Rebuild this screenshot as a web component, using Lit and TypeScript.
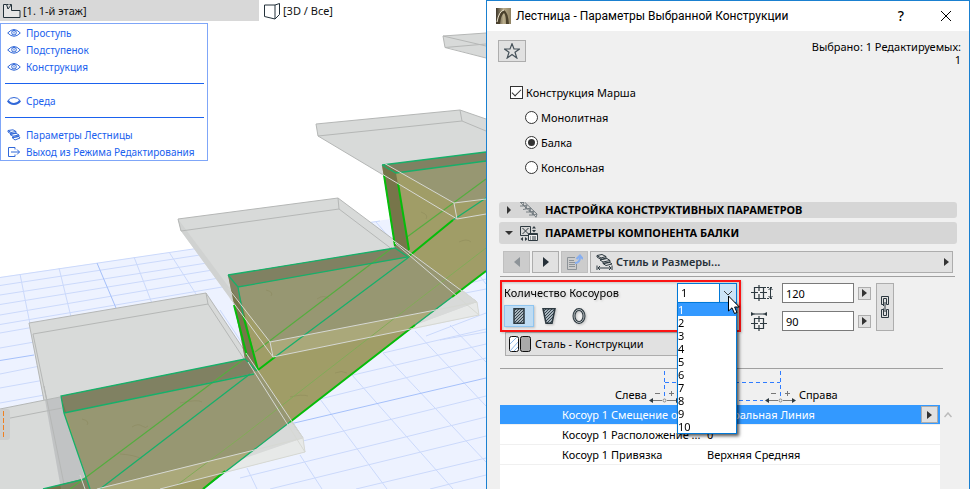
import { LitElement, html, css, svg } from "lit";
import { customElement, property, state } from "lit/decorators.js";
import { classMap } from "lit/directives/class-map.js";

const eye = svg`<svg width="14" height="12" viewBox="0 0 14 12" fill="none" stroke="currentColor"><path d="M.7 6Q7 -1 13.300 6Q7 12.500 .7 6Z"/><circle cx="7" cy="5.700" r="2.300"/><path d="M7 4.500v2"/></svg>`;
const lid = svg`<svg width="14" height="12" viewBox="0 0 14 12" fill="none" stroke="currentColor"><path d="M1 5.500Q3 2.500 7 2.500Q11 2.500 13 5.500"/><path d="M.8 5.500Q3 9 7 9Q11 9 13.200 5.500" stroke-width="2.200"/></svg>`;
const stairs = svg`<svg width="14" height="12" viewBox="0 0 14 12" fill="none" stroke="currentColor"><path d="M1 1.500L6 .8L9 2.500L4 3.500ZM4 3.500V5L9 4L9 2.500M3 5.500L9 4.300L12 6L6 7.200L3 5.500M6 7.200V8.500L12 7.300V6M5 8.500L12 7.500L13 9L8 11L5 8.500M1 1.500V3L4 5"/></svg>`;
const exit = svg`<svg width="14" height="12" viewBox="0 0 14 12" fill="none" stroke="currentColor"><path d="M8 3.500V1.500H1.500V10.500H8V8.500M4 6H12.500M10 3.500L12.500 6L10 8.500"/></svg>`;

@customElement("stair-scene")
class StairScene extends LitElement {
  static styles = css`
    :host { display: block; }
    svg { display: block; width: 100%; height: 100%; }
    .floor { fill: #edf2ff; }
    .grid { stroke: #cbd9fb; fill: none; }
    .axis { stroke: #a5c0fa; fill: none; }
    .slab { fill: #d8dad9; }
    .rim { fill: #d0d2d1; }
    .face { fill: #e7e9e8; }
    .wood { fill: #a09d67; }
    .riser { fill: #77754a; }
    .veil { fill: #8a9094; fill-opacity: 0.3; }
    .haze { fill: #8c9080; fill-opacity: 0.45; }
    .edge { stroke: #b5b7b6; fill: none; }
    .pale { stroke: #d6d8d3; fill: none; }
    .teal { stroke: #17b06a; fill: none; stroke-width: 1.3; }
    .bright { stroke: #06bd0a; fill: none; stroke-width: 2; }
    .soft { stroke: #55ad3f; fill: none; stroke-width: 1.2; }
    .faint { stroke: #82ab58; fill: none; }
    .knot { stroke: #858252; fill: none; opacity: 0.35; stroke-width: 1; }
    .grip { fill: #cccdcc; }
    .dash { stroke: #f08020; stroke-dasharray: 5 2; }
  `;
  render() {
    return html`<svg viewBox="0 0 486 489" preserveAspectRatio="xMinYMin slice" aria-hidden="true">
      <defs>
        <clipPath id="timber"><path d="M382 165L486 152V271L203 489H43L86 478L61 396L245 359L228 275L395 248Z" /></clipPath>
      </defs>
      <path class="floor" d="M0 277L193 249L380 220.500L486 205V489H0Z" />
      <path class="grid" d="M0 277.500L193 249L380 221M0 285.500L200 255M0 295L207 263M0 304.500L225 268M0 315L225 277M0 324.500L240 284M0 333L40 326M0 348L40 341M0 374L40 366M0 388L50 379M0 403L50 394M383 353L486 329M353 375L486 344M320 399L486 358M303 441L486 396M240 478L486 417M270 489L486 436M356 489L486 458M430 489L486 475M470 283L486 279M455 295L486 289M440 340L486 332M426 336L486 313" />
      <path class="grid" d="M20 274L30 324M59 268L73 325M134 257L160 324M169 252L196 294M220 310L250 355M247 468L257 489M300 455L322 489M320 399L387 489M352 375L453 489M383 353L486 462M415 331L486 406M450 325L486 362M479 275L486 284M376 222L400 250" />
      <path class="axis" d="M0 360.500L34 355M97 263L116 308M290 424L486 378" />

      <path class="slab" d="M443 36L486 33V58L445 47Z" />
      <path class="edge" d="M486 33L443 36L445 47.500L486 44M445 47.500L486 58M443 36L486 46" />
      <path class="slab" d="M316 124L460 110L486 119V214L457 219L318 136Z" />
      <path class="edge" d="M486 119L460 110L316 124L318 136L462 121L460 110M462 121L486 131M318 136L457 219" />
      <path class="slab" d="M178 219L338 198L477 302L479 315L273 357L181 231Z" />
      <path class="rim" d="M178 219L181 231L273 357L270 342Z" />
      <path class="edge" d="M178 219L338 198L339 209L181 231L178 219M338 198L477 302M339 209L479 315" />
      <path class="slab" d="M29 323L206 293L303 438L305 452L160 489H61Z" />
      <path class="edge" d="M61 488L29 323L206 293L208 304L33 334L65 489M206 293L303 438M208 304L305 452" />
      <path class="slab" d="M0 409L60 397L88 489H0Z" />
      <path class="veil" d="M45 400L61 397L88 489H61Z" />
      <path class="edge" d="M0 409L60 397M0 420L62 408M44 386L65 489" />
      <path class="face" d="M415 325L477 302L479 315L400 332ZM225 465L303 438L305 452L190 482Z" />
      <path class="slab" d="M415 325L450 297L464 291L477 302ZM290 422L303 438L240 459Z" />

      <path class="wood" d="M382 165L486 152V271L203 489H90L64 413L61 396L245 359L238 310L228 275L395 248Z" />
      <path class="riser" d="M382 165L486 152V161L396 173L409 250L408 257L238 287L258 370L250 374L64 413L61 396L245 359L228 275L395 248Z" />
      <path class="riser" d="M43 489L86 478L90 489Z" />
      <g clip-path="url(#timber)">
        <path class="haze" d="M178 219L338 198L477 302L270 342Z" />
        <path class="haze" d="M29 323L206 293L303 438L95 489H61Z" />
        <path class="haze" d="M382 150H486V199L454 203L382 162Z" />
        <path class="face" fill-opacity=".15" d="M270 342L477 302L479 315L273 357ZM95 489L303 438L305 452L160 489Z" />
      </g>
      <path class="knot" d="M82 419q8 2 5 6M132 427q6-4 10-1t6 0M180 403q18-4 22-1M266 290q8 2 5 6M317 299q7-5 12 0M357 264q10-3 20-1M421 212q8 3 5 7M459 242q8-4 12 0M335 373q7-3 12 0M290 397q12-3 18-1M120 454q15 1 22 5" />

      <path class="faint" d="M177 485L240 438L387 324L486 248" />
      <path class="soft" d="M70 489L85 478L244 359M255 352L392 248M407 237L486 179" />
      <path class="teal" d="M100 489L250 374M275 357L409 257M453 220L486 198M203 489L290 422M415 325L452 297M43 489L85 479" />
      <path class="bright" d="M258 370L275 357M409 256L453 220M290 422L415 325M452 297L486 271M203 489L225 471" />
      <path class="teal" d="M90 489L64 413L61 396L245 359L257 371M64 413L254 374M228 275L238 287L408 257L395 248L228 275M382 165L396 173L486 161M382 165L486 152M238 287L243 315" />
      <path class="bright" d="M234 305L247 356M243 315L258 370M384 175L395 246M398 183L409 250" />
      <path class="pale" d="M382 162L454 203L486 199M382 174L457 219L486 214M454 203L457 219M228 288L270 342L477 302L479 315L273 357L230 298M270 342L273 357M390 238L477 302M395 243L479 315M97 489L303 438L305 452L160 489M246 353L303 438M248 362L305 452M80 475L85 489" />
      <rect class="grip" x="-3" y="409" width="13" height="31" rx="3" />
      <path class="dash" d="M3.500 411V437" />
    </svg>`;
  }
}

@customElement("view-pane")
class ViewPane extends LitElement {
  static styles = css`
    :host { display: grid; grid-template-rows: 21px 1fr; position: relative; background: #fff; }
    stair-scene { position: absolute; inset: 0; }
    .tabs { display: grid; grid-template-columns: 259fr 227fr; position: relative; z-index: 2; background: #fff; }
    .tab { border: 0; padding: 0 2px; background: #fff; display: flex; align-items: center; gap: 2px; font: inherit; color: #111; text-align: left; }
    .tab.on { background: #d8d8d8; }
    .tab.second { padding: 0 5px; gap: 3px; }
    .menu { position: relative; z-index: 1; justify-self: start; align-self: start; margin-top: 2px; box-sizing: border-box; width: 208px; border: 1px solid #7fa6f8; padding: 0 3px 0 4px; background: #fff; font-size: 10px; }
    .item { display: flex; align-items: center; gap: 5px; width: 100%; height: 17px; padding: 0 0 0 2px; border: 0; background: none; font: inherit; color: #1b62ee; white-space: nowrap; }
    .line { height: 17px; display: flex; align-items: center; }
    .line::before { content: ""; flex: 1; height: 1px; background: #1b62ee; }
    .item svg { flex: none; color: #3168d8; }
  `;
  render() {
    const item = (icon: unknown, text: string) => html`<button class="item">${icon}<span>${text}</span></button>`;
    const line = html`<div class="line" role="separator"></div>`;
    return html`<stair-scene></stair-scene>
      <div class="tabs">
        <button class="tab on"><svg width="19" height="18" viewBox="0 0 19 18" fill="#e6e6e6" stroke="#23313a"><path d="M1.500 15.500V2.500H4.500L6 7L9.500 2.500V8.500H18V15.500Z"/><path d="M4.500 2.500H9" fill="none" stroke-dasharray="2 1"/></svg>[1. 1-й этаж]</button>
        <button class="tab second"><svg width="16" height="18" viewBox="0 0 16 18" fill="none" stroke="#23313a"><path d="M.5 3L11 3L15.500 1.500V12.500L11 17L.5 14.500ZM11 3V17"/></svg>[3D / Все]</button>
      </div>
      <div class="menu">
        ${item(eye, "Проступь")}${item(eye, "Подступенок")}${item(eye, "Конструкция")}
        ${line}${item(lid, "Среда")}${line}
        ${item(stairs, "Параметры Лестницы")}${item(exit, "Выход из Режима Редактирования")}
      </div>`;
  }
}

const playRight = svg`<svg width="6" height="10" viewBox="0 0 6 10"><path d="M0 0L6 5L0 10Z" fill="currentColor"/></svg>`;
const smallRight = svg`<svg width="5" height="8" viewBox="0 0 5 8"><path d="M0 0L5 4L0 8Z" fill="#333"/></svg>`;
const hatch = svg`<pattern id="h" width="3" height="3" patternUnits="userSpaceOnUse"><rect width="3" height="3" fill="#a9b6be" stroke="none"/><path d="M0 3L3 0" stroke="#34424b" stroke-width="1"/></pattern>`;

@customElement("settings-dialog")
class SettingsDialog extends LitElement {
  @property({ type: Number }) count = 1;
  @state() private profile = 0;

  static styles = css`
    :host { display: flex; flex-direction: column; box-sizing: border-box; min-width: 0; border: 1px solid #1a80d0; border-bottom: 0; background: #f0f0f0; color: #000; box-shadow: 0 3px 14px rgba(0, 0, 0, 0.4); }
    button, input, select { font: inherit; color: inherit; box-sizing: border-box; margin: 0; }
    button { padding: 0; border: 1px solid #adadad; background: #e1e1e1; display: flex; align-items: center; justify-content: center; }
    svg { display: block; flex: none; }
    .title { height: 30px; background: #fff; display: flex; align-items: center; padding: 0 17px 0 9px; gap: 5px; }
    .title h1 { flex: 1; margin: 0; font: 400 12px/16px Roboto, "Noto Sans", sans-serif; white-space: nowrap; }
    .title button { border: 0; background: none; width: 12px; height: 20px; font-size: 14px; font-weight: 500; }
    .title button + button { margin-left: 28px; }
    .top { display: flex; justify-content: space-between; align-items: flex-start; height: 26px; padding: 9px 8px 0 11px; }
    .star { width: 28px; height: 22px; }
    .selected { margin: 0; text-align: right; line-height: 13px; white-space: nowrap; }
    .selected span { display: block; }
    .options { padding: 14px 0 0 23px; }
    .options label { display: flex; align-items: center; gap: 3px; height: 25px; }
    .options .sub { margin-left: 15px; }
    .options input { appearance: none; width: 13px; height: 13px; border: 1px solid #333; background: #fff; display: grid; place-items: center; }
    .options input[type="radio"] { border-radius: 50%; }
    .options input[type="radio"]:checked::before { content: ""; width: 7px; height: 7px; border-radius: 50%; background: #333; }
    .options input[type="checkbox"]:checked::before { content: ""; width: 8px; height: 4px; border: solid #333; border-width: 0 0 1px 1px; transform: rotate(-45deg); margin-bottom: 3px; }
    .section { margin: 4px 12px 0; width: auto; height: 22px; border: 0; border-radius: 3px; background: #d6d6d6; justify-content: flex-start; gap: 7px; padding-left: 6px; font-weight: 700; white-space: nowrap; }
    .section.short { height: 16px; margin-top: 22px; }
    .tools { display: grid; grid-template-columns: 27px 27px 27px 1fr; gap: 2px; margin: 7px 16px 2px; height: 22px; }
    .tools button { color: #263038; }
    .tools button:disabled { background: #ccc; border-color: #bfbfbf; color: #8d9398; }
    .tools .wide { justify-content: flex-start; gap: 3px; padding: 0 3px 0 5px; font-weight: 600; }
    .wide span { flex: 1; text-align: left; }
    .rule { height: 1px; border: 0; margin: 1px 14px 0 13px; background: #a0a0a0; }
    .work { display: flex; align-items: flex-start; margin: 3px 14px 0 13px; }
    .mark { box-sizing: border-box; width: 241px; height: 52px; border: 2px solid #fb1414; padding: 1px 2px 0; filter: drop-shadow(1px 1px 1px rgba(0, 0, 0, 0.2)); }
    .count { display: flex; justify-content: space-between; align-items: center; height: 20px; }
    .combo { position: relative; width: 60px; height: 20px; }
    .combo select { appearance: none; width: 60px; height: 20px; border: 1px solid #0078d7; border-radius: 0; background: #fff; padding: 0 3px; display: block; }
    .drop { position: absolute; right: 0; top: 0; box-sizing: border-box; width: 18px; height: 20px; border: 1px solid #0078d7; background: #cce4f7; display: grid; place-items: center; pointer-events: none; }
    .list { position: absolute; z-index: 3; top: 19px; left: 0; width: 58px; margin: 0; padding: 0; list-style: none; border: 1px solid #0078d7; background: #fff; box-shadow: 2px 2px 3px rgba(0, 0, 0, 0.55); }
    .list li { height: 13px; line-height: 13px; }
    .list .on { background: #3399ff; color: #fff; }
    .cursor { position: absolute; z-index: 4; left: 51px; top: 12px; }
    .kinds { display: flex; margin-top: 2px; }
    .kinds button { width: 30px; height: 22px; border: 1px solid transparent; background: none; }
    .kinds .on { background: #bfdcf3; border-color: #8fc5f0; }
    .sizes { display: grid; grid-template-columns: 24px 72px 13px; column-gap: 4px; row-gap: 8px; align-items: center; margin: 3px 0 0 10px; }
    .sizes input { width: 72px; height: 20px; border: 1px solid #7a7a7a; background: #fff; padding: 0 3px; margin-left: 3px; }
    .sizes button { width: 13px; height: 13px; margin-left: 3px; }
    .link { width: 18px; height: 48px; margin: 3px 0 0 8px; }
    .steel { margin: 0 0 11px 18px; width: 210px; height: 24px; justify-content: flex-start; gap: 4px; padding-left: 3px; }
    .base { margin-right: 26px; }
    .plan { display: flex; align-items: center; height: 36px; margin: 0 29px 0 128px; gap: 2px; }
    .plan span { padding-top: 16px; }
    .data { display: flex; flex: 1; margin: 0 15px 0 13px; gap: 1px; }
    .sheet { flex: 1; background: #fff; }
    table { width: 100%; border-collapse: collapse; table-layout: fixed; }
    td { height: 19px; padding: 0; border-bottom: 1px solid #f0f0f0; white-space: nowrap; line-height: 16px; }
    td:first-child { width: 145px; padding-left: 62px; overflow: hidden; }
    td.act { width: 19px; }
    tr.on { background: #3399ff; color: #fff; }
    .act button { width: 17px; height: 17px; }
    .scroll { align-self: flex-start; border: 0; background: none; width: 13px; height: 20px; }
  `;

  render() {
    const counts = Array.from({ length: 10 }, (_, i) => i + 1);
    return html`
      <header class="title">
        <svg width="15" height="16" viewBox="0 0 15 16"><defs><linearGradient id="g"><stop offset="0" stop-color="#3e372b"/><stop offset=".5" stop-color="#b9ad8c"/><stop offset="1" stop-color="#8f8263"/></linearGradient></defs><path d="M0 0H15V16H0Z" fill="url(#g)"/><path d="M1 16Q3 3 8 2Q12 4 13 16H10Q10 7 8 5Q5 7 4 16Z" fill="#4b412c"/><path d="M1 14Q3 3 8 2" fill="none" stroke="#eee6d0"/></svg>
        <h1>Лестница - Параметры Выбранной Конструкции</h1>
        <button aria-label="Справка">?</button>
        <button aria-label="Закрыть"><svg width="10" height="10" viewBox="0 0 10 10" stroke="#000" fill="none"><path d="M0 0L10 10M10 0L0 10"/></svg></button>
      </header>
      <div class="top">
        <button class="star" aria-label="Избранное"><svg width="16" height="16" viewBox="0 0 16 16" fill="none" stroke="#46525a" stroke-width="1.200"><path d="M8 .8L10 6H15.500L11 9.300L12.800 15L8 11.500L3.200 15L5 9.300L.5 6H6Z"/></svg></button>
        <p class="selected"><span>Выбрано: 1 Редактируемых:</span><span>1</span></p>
      </div>
      <div class="options">
        <label><input type="checkbox" checked />Конструкция Марша</label>
        <label class="sub"><input type="radio" name="kind" />Монолитная</label>
        <label class="sub"><input type="radio" name="kind" checked />Балка</label>
        <label class="sub"><input type="radio" name="kind" />Консольная</label>
      </div>
      <button class="section short"><svg width="8" height="8" viewBox="0 0 8 8"><path d="M2 0L6 4L2 8Z" fill="#333"/></svg>
        <svg width="18" height="16" viewBox="0 0 18 16" fill="none" stroke="#6d767c"><path d="M0 .5L4 .5L3 4L7 3L6 7L11 6L10 10L14 9L13 13L17 12L16 15.500M1 1L16 15M0 4L3 4M3 7.500L6 7L5 4M6 10L10 10L9 6M9 13L13 13L12 9M5 .5L17 12" stroke-width=".9"/></svg>НАСТРОЙКА КОНСТРУКТИВНЫХ ПАРАМЕТРОВ</button>
      <button class="section"><svg width="8" height="8" viewBox="0 0 8 8"><path d="M0 2L8 2L4 6Z" fill="#333"/></svg>
        <svg width="18" height="17" viewBox="0 0 18 17" fill="none" stroke="#2d3940"><path d="M.5 1.500H10.500V10.500H.5ZM2.500 3L8.500 9M8.500 3L2.500 9"/><path d="M8.500 8.500H17.500V15.500H8.500Z" fill="#eee"/><path d="M8.500 9.500H17.500M10 12H11M12 12H16M10 14H11M12 14H16"/><path d="M12 5H16L14 7.500ZM12 3.500H16L14 1ZM3 12V16L.5 14ZM5 12V16L7.500 14Z" fill="#2d3940" stroke="none"/></svg>ПАРАМЕТРЫ КОМПОНЕНТА БАЛКИ</button>
      <div class="tools">
        <button disabled aria-label="Назад"><svg width="6" height="10" viewBox="0 0 6 10"><path d="M6 0L0 5L6 10Z" fill="currentColor"/></svg></button>
        <button aria-label="Вперёд">${playRight}</button>
        <button disabled aria-label="Передать"><svg width="17" height="16" viewBox="0 0 17 16" fill="none" stroke="#8d9398"><path d="M9 3.500H1.500V15.500H10.500V10M3 6.500H8M3 8.500H9M3 10.500H9M3 12.500H9"/><path d="M9 9Q14 9 14 3M10.500 5L14 1.500L17 5" stroke="#86aef0" stroke-width="2"/></svg></button>
        <button class="wide"><svg width="17" height="17" viewBox="0 0 17 17" fill="none" stroke="#2d3940"><path d="M1 1.500L6 .5L10 2.500L5 4ZM1 1.500V3L5 5.500M5 4V5.500L10 4V2.500M4 6L11 4.500L14 6.500L7 8ZM7 8V9.500L14 8V6.500M7 9.500L14 8.500L16 10L10 11.500ZM1 11.500V16M16 11.500V16M2 14H15M4 12L2 14L4 16M13 12L15 14L13 16"/></svg><span>Стиль и Размеры...</span>${smallRight}</button>
      </div>
      <hr class="rule" />
      <div class="work">
        <div class="mark">
          <div class="count">
            <label for="count">Количество Косоуров</label>
            <div class="combo">
              <select id="count">${counts.map((n) => html`<option ?selected=${n === this.count}>${n}</option>`)}</select>
              <div class="drop"><svg width="8" height="5" viewBox="0 0 8 5" fill="none" stroke="#444"><path d="M0 0L4 4L8 0"/></svg></div>
              <ul class="list" role="listbox">${counts.map((n) => html`<li role="option" class=${classMap({ on: n === this.count })} @click=${() => (this.count = n)}>${n}</li>`)}</ul>
              <svg class="cursor" width="12" height="20" viewBox="0 0 12 20"><path d="M.5 1V16L4 12.800L6.500 18.500L9 17.500L6.600 12H11.300Z" fill="#fff" stroke="#000"/></svg>
            </div>
          </div>
          <div class="kinds">
            ${[
              svg`<path d="M3 .8H13V15.200H3Z"/>`,
              svg`<path d="M2 .8H14L11 15.200H5Z"/>`,
              svg`<ellipse cx="8" cy="8" rx="5" ry="6.500" stroke-width="3"/><ellipse cx="8" cy="8" rx="5" ry="6.500" stroke="#d6d9da" stroke-width=".8"/>`,
            ].map((shape, i) => html`<button class=${classMap({ on: i === this.profile })} aria-label=${`Профиль ${i + 1}`} @click=${() => (this.profile = i)}>
              <svg width="16" height="16" viewBox="0 0 16 16" stroke="#2d3940" stroke-width="1.500" fill=${i < 2 ? "url(#h)" : "none"}><defs>${hatch}</defs>${shape}</svg></button>`)}
          </div>
        </div>
        <div class="sizes">
          <svg width="22" height="16" viewBox="0 0 22 16" fill="none" stroke="#2d3940"><path d="M3.500 2.500H12.500V13.500H3.500ZM0 7.500H7M9 7.500H16M8 0V6M8 9V16" stroke-width="1.200"/><path d="M13 2.500H22M13 13.500H22" stroke-dasharray="2 1"/><path d="M19.500 3V13M17.500 5L19.500 3L21.500 5M17.500 11L19.500 13L21.500 11"/></svg>
          <input aria-label="Высота" value="120" /><button aria-label="Изменить высоту">${smallRight}</button>
          <svg width="22" height="20" viewBox="0 0 22 20" fill="none" stroke="#2d3940"><path d="M3.500 7.500H12.500V17.500H3.500ZM0 12.500H7M9 12.500H16M8 5V11M8 14V20" stroke-width="1.200"/><path d="M3 3H13"/><path d="M0 1V5L4 3ZM16 1V5L12 3Z" fill="#2d3940" stroke="none"/></svg>
          <input aria-label="Ширина" value="90" /><button aria-label="Изменить ширину">${smallRight}</button>
        </div>
        <button class="link" aria-label="Связать размеры"><svg width="8" height="22" viewBox="0 0 8 22" fill="none" stroke="#2d3940"><path d="M2.500 8.500H.5V.5H7.500V8.500H5.500V2.500H2.500V10M2.500 13.500H.5V21.500H7.500V13.500H5.500V19.500H2.500V12.500M4 6V16"/></svg></button>
      </div>
      <button class="steel"><svg width="22" height="16" viewBox="0 0 22 16" stroke="#111"><rect x=".5" y=".5" width="9" height="15" rx="2" fill="#fff"/><path d="M1 8L8 1M1 15L9 6M5 15L9 11" stroke="#8eb9e8" fill="none"/><rect x="11.500" y=".5" width="10" height="15" rx="2" fill="#aaa"/></svg>Сталь - Конструкции</button>
      <hr class="rule base" />
      <div class="plan">
        <span>Слева</span>
        <svg width="148" height="36" viewBox="0 0 148 36" fill="none"><path d="M15.500 2V29M131.500 2V29M16 13.500H131M34 31.500H114" stroke="#2f7cff" stroke-dasharray="4 3"/><path d="M3 31.500H13M18 31.500H29M119 31.500H129M134 31.500H144M6 24.500H11M20 24.500H25M22.500 22V27M122 24.500H127M136 24.500H141M138.500 22V27" stroke="#777"/><path d="M0 31.500L4 29V34ZM31 31.500L27 29V34ZM116 31.500L120 29V34ZM147 31.500L143 29V34Z" fill="#2d3940"/><circle cx="15.500" cy="31.500" r="1.500" stroke="#888"/><circle cx="131.500" cy="31.500" r="1.500" stroke="#888"/></svg>
        <span>Справа</span>
      </div>
      <div class="data">
        <div class="sheet">
          <table>
            <tr class="on"><td>Косоур 1 Смещение о...</td><td>Центральная Линия</td><td class="act"><button aria-label="Выбрать линию">${smallRight}</button></td></tr>
            <tr><td>Косоур 1 Расположение ...</td><td>0</td><td class="act"></td></tr>
            <tr><td>Косоур 1 Привязка</td><td>Верхняя Средняя</td><td class="act"></td></tr>
          </table>
        </div>
        <button class="scroll" aria-label="Вверх"><svg width="8" height="6" viewBox="0 0 8 6" fill="none" stroke="#bbb" stroke-width="1.500"><path d="M.5 5L4 1L7.500 5"/></svg></button>
      </div>`;
  }
}

@customElement("app-root")
class AppRoot extends LitElement {
  static styles = css`
    :host { display: grid; grid-template-columns: 486fr 484fr; min-height: 100vh; background: #fff; font: 11px/16px "Noto Sans", "Open Sans", sans-serif; }
  `;
  render() {
    return html`<view-pane></view-pane><settings-dialog></settings-dialog>`;
  }
}
